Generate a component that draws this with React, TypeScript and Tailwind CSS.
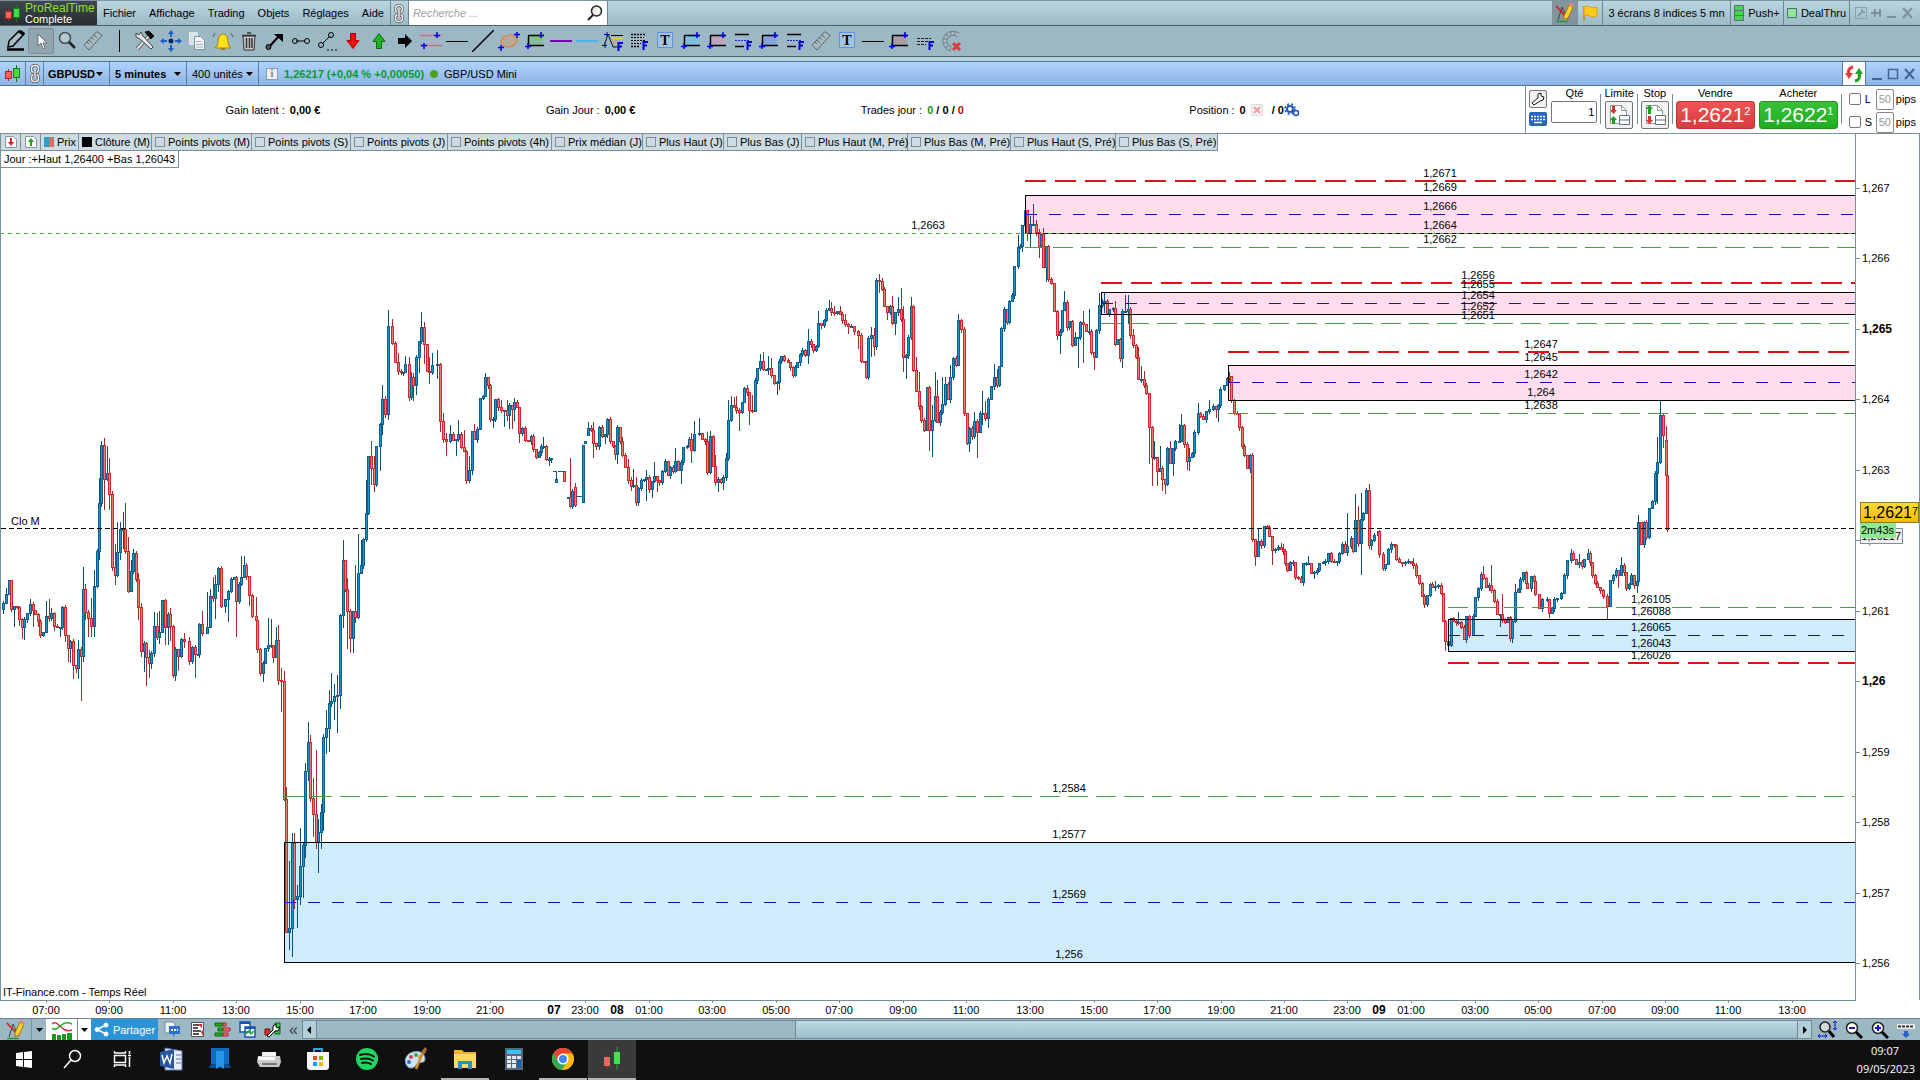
// Trading workstation: menu bar, drawing tools, order panel, candlestick chart, taskbar

import type { ReactNode } from "react";
import { clsx } from "clsx";

// Vertical origin of the chart data
const CHART_TOP = 134;

// [x, close, high, low, open] — 0 or missing means "derive it"
type Candle = [number, number, number?, number?, number?];

const CANDLES: Candle[] = [
  [3, 603, 601, 613, 609], [6, 594, 588, 602], [9, 580, 580, 594], [11, 609, 580, 611], [14, 606, 606, 626],
  [17, 607, 606, 608], [19, 619, 606, 625], [22, 627, 0, 638], [24, 619, 0, 639], [27, 613], [30, 604, 599],
  [33, 610, 0, 626], [35, 614], [38, 621, 0, 626], [40, 635], [43, 632, 0, 636], [46, 616, 601], [49, 618, 599],
  [51, 613, 608], [54, 626, 0, 630], [57, 627], [60, 627, 0, 636], [62, 607], [65, 635, 0, 641], [68, 648, 0, 661],
  [70, 641, 0, 662], [73, 665, 0, 678], [76, 668, 0, 672], [78, 649, 640, 678], [81, 656, 0, 700], [83, 589, 567, 661],
  [85, 612, 584, 619], [88, 618, 0, 636], [91, 626, 598, 636], [94, 586, 570, 636], [97, 551, 549], [99, 503, 478, 559],
  [101, 445, 441], [104, 479, 438, 509], [107, 473, 446], [109, 494, 458, 509], [112, 567, 491], [115, 575, 544, 584],
  [117, 552, 522, 576], [120, 529, 522, 559], [123, 529, 512, 548], [125, 551, 503], [128, 591, 537, 592], [131, 571, 560],
  [133, 553, 549, 573], [136, 579], [138, 607, 573, 619], [141, 651, 603, 656], [144, 643, 0, 671], [146, 657, 642, 685],
  [149, 663, 650, 677], [151, 653, 0, 668], [154, 626, 612], [157, 637, 613], [159, 632, 611, 643], [162, 600],
  [165, 627, 0, 644], [168, 614, 0, 644], [170, 626, 608, 640], [173, 675, 0, 677], [175, 649, 0, 680],
  [178, 656, 0, 670], [181, 639], [184, 641, 633, 647], [189, 661, 637], [192, 647], [195, 654, 0, 677], [198, 654],
  [199, 624], [202, 633, 611], [207, 627, 592, 633], [210, 596, 589], [213, 598, 577], [215, 584, 575, 618],
  [218, 568, 567, 591], [221, 606, 0, 607], [225, 599, 0, 612], [228, 591, 0, 621], [231, 579], [234, 577],
  [236, 601, 0, 636], [239, 584], [241, 577, 556], [244, 565, 556], [246, 576], [249, 595, 0, 605], [252, 616],
  [256, 620, 597], [257, 649], [260, 673], [263, 663, 0, 681], [265, 648], [268, 645, 618], [271, 645, 619],
  [273, 657, 0, 662], [276, 640, 627], [278, 680, 625, 684], [281, 681, 668, 711], [284, 799, 671], [286, 932, 787],
  [289, 928, 861, 949], [292, 843, 833, 956], [294, 899, 833, 908], [297, 896, 885, 927], [300, 866, 828, 904],
  [303, 845, 0, 897], [305, 771, 763, 857], [308, 742, 722, 780], [310, 798, 735], [313, 814, 778, 836],
  [316, 841, 750, 848], [318, 832, 819, 872], [321, 812, 804, 848], [323, 737, 734, 830], [326, 728, 710, 753],
  [329, 703, 690, 751], [331, 701, 673], [334, 696, 684, 719], [337, 695, 675, 732], [340, 615, 0, 708],
  [343, 560, 540, 627], [345, 589, 560], [347, 611, 578, 648], [350, 638, 0, 652], [353, 611, 0, 652],
  [355, 617, 565, 622], [358, 573, 534], [361, 565, 540], [363, 539], [366, 513, 480], [368, 456], [371, 468, 441, 484],
  [374, 484, 456, 491], [376, 446], [380, 424, 0, 470], [382, 399, 385, 434], [385, 414, 396], [388, 326, 310, 419],
  [392, 343, 319], [395, 362, 341], [398, 371, 353], [401, 372], [403, 372, 0, 375], [405, 364, 356], [409, 397, 357],
  [411, 377, 372], [413, 385, 373, 400], [416, 357, 0, 394], [419, 341, 0, 372], [421, 327, 312], [424, 344, 322, 363],
  [427, 371, 344], [429, 372, 357, 383], [432, 365, 353], [437, 364, 350, 378], [440, 421, 0, 431], [443, 439, 413],
  [446, 441, 433, 455], [450, 434, 425], [453, 440], [456, 439, 0, 455], [458, 434, 420], [461, 447], [464, 451, 430],
  [466, 480, 0, 483], [469, 470, 456], [472, 431, 0, 474], [474, 439, 424], [477, 429], [480, 398, 0, 428], [483, 396],
  [485, 377, 373], [488, 385], [490, 419], [493, 419, 0, 427], [495, 399, 0, 421], [498, 407], [501, 410, 400],
  [504, 410, 0, 426], [507, 415, 400, 420], [509, 405, 403, 428], [512, 409, 0, 428], [514, 402, 398, 420], [517, 407],
  [519, 433, 0, 442], [522, 428], [525, 440], [528, 441], [531, 436], [533, 449], [536, 457], [539, 452], [541, 446],
  [543, 446, 437], [546, 459], [549, 459, 0, 465], [551, 458], [556, 479, 471, 482, 482], [564, 481, 471, 481, 471],
  [568, 497, 497, 498, 498], [570, 506, 458, 507, 497], [572, 491], [575, 505, 483, 506, 487], [583, 445, 445, 502, 502],
  [585, 441, 441, 443, 443], [588, 428, 422, 435, 435], [591, 430, 425], [593, 443, 422, 457], [596, 446],
  [599, 427, 0, 449], [602, 436], [605, 434, 0, 443], [607, 419], [610, 441], [613, 446], [615, 454, 0, 459],
  [617, 427, 0, 463], [620, 441, 427], [622, 455, 437], [625, 467], [628, 480, 459], [631, 486, 477, 490], [633, 485, 469],
  [636, 502, 477, 505], [638, 488], [641, 480], [644, 479], [646, 477, 470, 500], [649, 489], [652, 481, 0, 497],
  [654, 476, 462, 482], [657, 480, 477, 491], [659, 482], [662, 471], [665, 461], [668, 475], [670, 467], [673, 471],
  [675, 461, 448], [678, 470], [681, 462, 0, 483], [683, 447], [687, 446], [689, 439, 437], [691, 450, 433, 462],
  [694, 434, 421, 451], [699, 433, 418], [702, 439], [705, 441], [707, 472, 432], [710, 436, 431, 473], [713, 466],
  [715, 482, 455], [718, 479, 477, 491], [721, 482], [723, 477, 0, 489], [726, 458, 453], [728, 420, 400], [731, 405, 396],
  [734, 407, 397], [736, 410, 396], [739, 412, 0, 430], [742, 402], [744, 388], [747, 392, 385], [749, 410, 0, 424],
  [752, 411, 395], [755, 380], [757, 368], [760, 361, 354, 370], [763, 369, 352], [766, 369], [768, 368, 356, 374],
  [771, 375, 358], [774, 383], [777, 382, 0, 394], [779, 361, 0, 389], [781, 356], [784, 360], [788, 362], [790, 367],
  [793, 375], [795, 367], [797, 362], [800, 354], [802, 350], [805, 355, 349], [808, 341, 329, 363], [811, 344],
  [813, 350], [816, 346], [818, 323, 311, 347], [821, 325], [824, 320], [826, 310], [829, 308, 300], [831, 312, 302],
  [834, 313, 306], [837, 311], [840, 314, 306], [842, 320], [845, 324, 314], [848, 326, 0, 333], [851, 326], [854, 331],
  [858, 335, 0, 348], [861, 361], [864, 362], [866, 377, 0, 378], [868, 338], [871, 335, 327, 356], [874, 346, 328, 355],
  [876, 280], [879, 281, 274, 292], [882, 289, 278], [884, 306], [887, 312, 0, 319], [890, 306], [892, 323, 296],
  [895, 312, 0, 334], [898, 309, 297], [901, 319, 288], [903, 357, 306, 371], [906, 355, 0, 378], [908, 337],
  [911, 306, 297], [913, 370], [916, 391, 357], [919, 406, 372], [921, 420], [924, 430], [927, 387], [929, 430, 386, 450],
  [932, 420, 405, 456], [935, 396, 372], [937, 422, 380], [940, 412], [942, 404, 377], [945, 384, 377], [948, 399],
  [950, 377, 365], [953, 358], [956, 365], [958, 320, 314], [961, 329, 319], [964, 413], [967, 443], [969, 428, 0, 451],
  [972, 436], [974, 421, 412], [977, 432, 419, 457], [980, 413], [982, 413, 391, 424], [985, 418, 401], [988, 399, 0, 427],
  [991, 386], [994, 377, 364], [997, 385, 369], [999, 366], [1001, 328], [1004, 309], [1007, 322], [1009, 301],
  [1012, 295], [1014, 266], [1018, 247, 235], [1020, 246], [1022, 225, 0, 251], [1025, 210], [1027, 233, 214, 240],
  [1030, 224, 216, 246], [1033, 224, 204], [1036, 232, 220], [1039, 246, 229, 257], [1041, 234], [1043, 267, 228],
  [1046, 246, 0, 281], [1048, 279], [1051, 283], [1054, 311], [1057, 335, 0, 339], [1060, 331, 0, 353], [1062, 310],
  [1064, 302, 291], [1067, 327], [1069, 321], [1072, 345], [1075, 337, 332], [1078, 337, 0, 367], [1080, 322],
  [1083, 324, 311, 362], [1086, 331], [1089, 331, 309], [1091, 352], [1094, 357, 0, 369], [1096, 330], [1099, 305, 293],
  [1102, 302, 299], [1104, 301, 293, 312], [1107, 313], [1109, 309], [1113, 308], [1115, 344, 301], [1117, 339],
  [1120, 358], [1122, 311, 0, 367], [1125, 311, 295], [1128, 309, 295, 323], [1130, 335], [1133, 345, 329], [1136, 357],
  [1138, 379, 347], [1141, 379, 366], [1144, 385, 371], [1146, 393], [1149, 427, 0, 463], [1152, 457, 0, 485],
  [1154, 457, 441], [1157, 471, 0, 485], [1160, 468, 446], [1162, 479, 0, 490], [1165, 484, 0, 493], [1167, 448],
  [1170, 463, 441], [1173, 448, 0, 475], [1175, 441], [1179, 441, 424], [1181, 425, 414], [1184, 444], [1187, 461, 0, 469],
  [1189, 457, 448, 470], [1192, 453], [1194, 432], [1198, 413, 403], [1200, 416, 412], [1203, 419], [1206, 411],
  [1209, 409, 400], [1213, 406], [1216, 409, 0, 417], [1218, 405, 0, 421], [1220, 389], [1224, 385], [1227, 378],
  [1229, 376, 372], [1231, 400], [1234, 413], [1237, 414], [1239, 427], [1242, 446], [1244, 455], [1247, 468],
  [1250, 455, 0, 472], [1252, 539], [1255, 556, 0, 565], [1258, 541, 528], [1261, 545], [1264, 526], [1267, 527],
  [1269, 536], [1272, 550, 0, 564], [1275, 549], [1278, 547], [1281, 549, 543], [1283, 551, 544], [1285, 563], [1287, 570],
  [1290, 562], [1293, 562], [1295, 577], [1298, 578], [1301, 582], [1303, 563], [1306, 563], [1308, 563, 556], [1311, 573],
  [1314, 572, 0, 578], [1317, 570], [1319, 563], [1323, 562], [1325, 561], [1328, 553], [1331, 561], [1334, 562],
  [1337, 561], [1339, 553], [1342, 544], [1345, 552, 541], [1347, 546, 513], [1351, 538], [1353, 551], [1355, 520, 494],
  [1358, 543, 506], [1361, 519, 493, 574], [1363, 513], [1366, 490], [1369, 545, 484], [1371, 540, 0, 549], [1374, 535],
  [1378, 531], [1379, 554], [1383, 568], [1385, 564, 0, 570], [1388, 549], [1391, 544], [1394, 545], [1396, 559],
  [1399, 562], [1402, 563], [1405, 562], [1408, 561], [1411, 563], [1413, 565, 558], [1416, 575], [1419, 583], [1422, 596],
  [1424, 604], [1427, 595], [1430, 584], [1432, 587], [1435, 586, 581], [1438, 585], [1441, 593], [1443, 621],
  [1445, 641, 0, 650], [1448, 645], [1451, 618], [1453, 621], [1456, 622], [1458, 622, 612], [1461, 627], [1464, 639],
  [1466, 616], [1469, 635], [1473, 616, 0, 635], [1475, 597], [1478, 588], [1481, 574], [1483, 578, 566], [1486, 587],
  [1489, 585], [1491, 590, 565], [1494, 601], [1497, 614], [1500, 614, 0, 626], [1502, 620, 594], [1505, 622], [1508, 617],
  [1510, 638], [1512, 621, 0, 642], [1515, 592, 584], [1518, 589], [1520, 579], [1523, 572], [1526, 583], [1527, 588],
  [1531, 576], [1534, 581], [1535, 594], [1539, 608], [1542, 599], [1547, 599], [1549, 613, 0, 617], [1552, 608],
  [1554, 599], [1557, 598], [1561, 593], [1564, 575], [1567, 560], [1571, 553, 549], [1573, 559], [1576, 564],
  [1579, 562, 554], [1582, 566], [1584, 559], [1588, 553, 549], [1590, 562], [1592, 575], [1595, 583], [1597, 587],
  [1600, 590], [1603, 596], [1607, 606, 0, 619], [1610, 580], [1613, 575], [1616, 570], [1618, 575, 0, 587],
  [1621, 565, 557], [1624, 572], [1626, 588], [1629, 584], [1631, 575], [1634, 585], [1637, 581, 0, 592], [1638, 522, 515],
  [1641, 544], [1644, 522], [1646, 537], [1649, 508], [1652, 501], [1655, 473], [1657, 462, 437, 503], [1660, 415, 400],
  [1663, 435, 0, 447], [1666, 475, 426, 0, 440], [1667, 529, 468],
];

type Zone = {
  x: number;
  top: number;
  mid: number;
  bottom: number;
  red?: number;
  green: number;
  fill: string;
  labelX: number;
  labels: Array<[string, number]>;
};

const PINK = "#FFDDEE";
const SKY = "#CFECFD";

const ZONES: Zone[] = [
  { x: 1025, top: 195, mid: 214, bottom: 233, red: 181, green: 247, fill: PINK, labelX: 1440,
    labels: [["1,2671", 181], ["1,2669", 195], ["1,2666", 214], ["1,2664", 233], ["1,2662", 247]] },
  { x: 1101, top: 292, mid: 303, bottom: 314, red: 283, green: 323, fill: PINK, labelX: 1478,
    labels: [["1,2656", 283], ["1,2655", 292], ["1,2654", 303], ["1,2652", 314], ["1,2651", 323]] },
  { x: 1228, top: 365, mid: 382, bottom: 400, red: 352, green: 413, fill: PINK, labelX: 1541,
    labels: [["1,2647", 352], ["1,2645", 365], ["1,2642", 382], ["1,264", 400], ["1,2638", 413]] },
  { x: 1448, top: 619, mid: 635, bottom: 651, red: 663, green: 607, fill: SKY, labelX: 1651,
    labels: [["1,26105", 607], ["1,26088", 619], ["1,26065", 635], ["1,26043", 651], ["1,26026", 663]] },
  { x: 284, top: 842, mid: 902, bottom: 962, green: 796, fill: SKY, labelX: 1069,
    labels: [["1,2584", 796], ["1,2577", 842], ["1,2569", 902], ["1,256", 962]] },
];

const PRICE_TICKS: Array<[string, number]> = [
  ["1,267", 188], ["1,266", 258], ["1,265", 329], ["1,264", 399], ["1,263", 470], ["1,262", 540],
  ["1,261", 611], ["1,26", 681], ["1,259", 752], ["1,258", 822], ["1,257", 893], ["1,256", 963],
];

const TIME_TICKS: Array<[string, number]> = [
  ["07:00", 46], ["09:00", 109], ["11:00", 173], ["13:00", 236], ["15:00", 300], ["17:00", 363], ["19:00", 427],
  ["21:00", 490], ["07", 554], ["23:00", 585], ["08", 617], ["01:00", 649], ["03:00", 712], ["05:00", 776],
  ["07:00", 839], ["09:00", 903], ["11:00", 966], ["13:00", 1030], ["15:00", 1094], ["17:00", 1157], ["19:00", 1221],
  ["21:00", 1284], ["23:00", 1347], ["09", 1379], ["01:00", 1411], ["03:00", 1475], ["05:00", 1538], ["07:00", 1602],
  ["09:00", 1665], ["11:00", 1728], ["13:00", 1792],
];

const MENUS = ["Fichier", "Affichage", "Trading", "Objets", "Réglages", "Aide"];

const INDICATORS = [
  { label: "Points pivots (M)", width: "w-[100px]" },
  { label: "Points pivots (S)", width: "w-[99px]" },
  { label: "Points pivots (J)", width: "w-[97px]" },
  { label: "Points pivots (4h)", width: "w-[104px]" },
  { label: "Prix médian (J)", width: "w-[91px]" },
  { label: "Plus Haut (J)", width: "w-[81px]" },
  { label: "Plus Bas (J)", width: "w-[78px]" },
  { label: "Plus Haut (M, Pré)", width: "w-[106px]" },
  { label: "Plus Bas (M, Pré)", width: "w-[103px]" },
  { label: "Plus Haut (S, Pré)", width: "w-[105px]" },
  { label: "Plus Bas (S, Pré)", width: "w-[102px]" },
];

export default function App() {
  return (
    <div className="flex h-screen min-h-[600px] w-full flex-col overflow-hidden bg-white font-['Liberation_Sans',Arial,sans-serif] text-[11px] leading-4 text-black">
      <MenuBar />
      <DrawingBar />
      <div className="h-1 shrink-0 bg-[#b9d3dd]" />
      <ChartTitle />
      <OrderPanel />
      <Chart />
      <TimeAxis />
      <BottomBar />
      <Taskbar />
    </div>
  );
}

// =====================================================================
// Menu bar
// =====================================================================
function MenuBar() {
  return (
    <header className="flex h-[26px] shrink-0 items-stretch border-t border-b border-t-[#7d929c] border-b-[#4d626c] bg-gradient-to-b from-[#b9d5e0] to-[#9cbbc7]">
      <div className="flex w-[97px] items-center gap-1 bg-gradient-to-b from-[#3f474c] to-[#282e32] pl-1">
        <CandlesIcon size={17} />
        <div className="leading-none">
          <div className="text-xs leading-3 text-[#8ee02c]">ProRealTime</div>
          <div className="leading-[10px] text-white">Complete</div>
        </div>
      </div>
      <nav className="flex items-center gap-[13px] px-[6px]">
        {MENUS.map((m) => (
          <button key={m} type="button">
            {m}
          </button>
        ))}
      </nav>
      <div className="flex w-[19px] items-center justify-center border-x border-[#6d8590]">
        <ChainIcon />
      </div>
      <label className="flex w-[199px] items-center border-r border-[#6d8590] bg-white pr-1">
        <input
          type="text"
          aria-label="Recherche"
          placeholder="Recherche ..."
          className="min-w-0 flex-1 pl-1 italic outline-none placeholder:text-[#a0a0a0]"
        />
        <LoupeIcon />
      </label>
      <div className="ml-auto flex items-stretch">
        <button type="button" aria-label="Dessiner" className="flex w-[26px] items-center justify-center bg-[#83949d]">
          <PencilChartIcon />
        </button>
        <button type="button" aria-label="Alerte" className="flex w-[25px] items-center justify-center border-r border-[#6d8590]">
          <svg width="17" height="18" viewBox="0 0 17 18">
            <path d="M2 2v15" stroke="#c98a00" strokeWidth="1.5" />
            <path d="M2 3c4-3 7 3 13 0v9c-6 3-9-3-13 0Z" fill="#ffc91c" stroke="#e0a000" />
          </svg>
        </button>
        <span className="flex w-[128px] items-center justify-center border-r border-[#6d8590]">3 écrans 8 indices 5 mn</span>
        <button type="button" className="flex w-[53px] items-center justify-center gap-1 border-r border-[#6d8590]">
          <svg width="10" height="16" viewBox="0 0 10 16">
            <path d="M.5.5h9v15h-9ZM.5 5.5h9M.5 10.5h9" fill="#4bd44b" stroke="#4e7180" />
          </svg>
          Push+
        </button>
        <button type="button" className="flex w-[66px] items-center justify-center gap-1 border-r border-[#6d8590]">
          <span className="h-[10px] w-[10px] border border-[#4e7180] bg-[#8fe88f]" />
          DealThru
        </button>
        <div className="flex w-[70px] items-center justify-center">
          <svg width="62" height="14" viewBox="0 0 62 14" fill="none" stroke="#7b929c" strokeWidth="2">
            <rect x="1.500" y="1.500" width="11" height="11" strokeWidth="1" strokeDasharray="2 1" />
            <path d="M4 10l5-5M8 3v3h3" strokeWidth="1.500" />
            <path d="M17 7h4M21 3v8M21 7h6M26 3v8" />
            <path d="M33 11h9M49 2l9 10M58 2l-9 10" />
          </svg>
        </div>
      </div>
    </header>
  );
}

// =====================================================================
// Drawing tools
// =====================================================================
const PLUS = "#0000e0";

function BoxGlyph({ fill }: { fill: string }) {
  return (
    <>
      <rect x="5" y="6" width="14" height="9" fill={fill} />
      <path d="M4 5.500h16M4 15.500h16M4.500 6v9" stroke="#000" strokeWidth="1.500" />
      <path d="M1 16.500h6M4 13v6M14 5.500h6M17 2v6" stroke={PLUS} strokeWidth="1.500" />
    </>
  );
}

function LevelsGlyph({ full }: { full?: boolean }) {
  return (
    <>
      <path d="M3 4.500h14M3 16.500h9" stroke="#000" strokeWidth="1.500" strokeDasharray={full ? undefined : "2 1"} />
      <path d="M3 10.500h14" stroke={full ? "#22c" : "#000"} strokeDasharray="2 1" />
      <path d="M15.500 20v-8H20M15.500 15.500H19" stroke={PLUS} strokeWidth="2" />
    </>
  );
}

function NoteGlyph() {
  return (
    <>
      <path d="M3.500 2.500h15v15h-15Z" fill="#a6c5dc" stroke="#5b93e6" />
      <text x="11" y="15" textAnchor="middle" className="fill-black stroke-none font-['Liberation_Serif',serif] text-[14px] font-bold">
        T
      </text>
    </>
  );
}

function RulerGlyph() {
  return (
    <>
      <path d="M2 15 15 1.500l5 4L7 20Z" fill="#a9b9c0" stroke="#56666e" />
      <path d="m5 12 2 2M7 10l3 3M9.500 7.500l2 2M12 5l3 3" stroke="#56666e" />
    </>
  );
}

const TOOLS: Array<{ name: string; glyph: ReactNode }> = [
  { name: "Crayon", glyph: <><path d="M3 19.500h17" stroke="#000" strokeWidth="2.500" /><path d="m4 17 1-6L15 1l5 3L9 16Z" fill="#a9bcc4" stroke="#000" strokeWidth="1.500" /><path d="m14 2 5 4 2-3-4-3Z" fill="#000" /></> },
  { name: "Curseur", glyph: <path d="m8 4 0 12 3-3 2 6 2-1-2-5h4Z" fill="#fff" stroke="#6b6f72" /> },
  { name: "Zoom", glyph: <><circle cx="9" cy="8" r="5.500" fill="#b4cad3" stroke="#454d52" strokeWidth="1.500" /><path d="m13 12 6 6" stroke="#222" strokeWidth="2.500" /></> },
  { name: "Règle", glyph: <RulerGlyph /> },
  { name: "", glyph: <path d="M11.500 0v22" stroke="#000" /> },
  { name: "Outils", glyph: <><path d="m3 19 12-13" stroke="#555" strokeWidth="4" /><path d="m3 19 12-13" stroke="#e5e5e5" strokeWidth="2" /><path d="M2 3v4l4 2 11 10 2-2L9 6 7 2 5 5Z" fill="#e5e5e5" stroke="#444" /><path d="m11 2 4-1 5 5-3 3Z" fill="#111" stroke="#111" /></> },
  { name: "Déplacer", glyph: <><path d="M11 1v6M11 15v6M1 11h6M15 11h6" stroke="#1b5fc8" strokeWidth="2" /><path d="m8 4 3-4 3 4ZM8 18l3 4 3-4ZM4 8l-4 3 4 3ZM18 8l4 3-4 3Z" fill="#1b5fc8" /><circle cx="11" cy="11" r="2.500" fill="#0b2350" /></> },
  { name: "Copier", glyph: <><path d="M3.500 2.500h8v12h-8Z" fill="#d9e2e6" stroke="#dfe8ec" /><path d="M8.500 6.500h6l4 4v9h-10Z" fill="#f5f8f9" stroke="#7e959f" /><path d="M10 11.500h5M10 14.500h7M10 17h7" stroke="#9aacb4" /></> },
  { name: "Alarme", glyph: <><path d="M5 16c2-4 0-12 6-12s4 8 6 12l2 2H3Z" fill="#ffe11c" stroke="#a67c00" /><path d="M9 19h4" stroke="#a67c00" strokeWidth="2" /><path d="M3 3 1 7M19 3l2 4" stroke="#555" /></> },
  { name: "Supprimer", glyph: <><path d="M5 6h12l-1 14H6Z" fill="#c9c9c9" stroke="#333" /><path d="M4 5.500h14M9 3h4M8.500 8v10M11.500 8v10M14 8v10" stroke="#333" strokeWidth="1.500" /></> },
  { name: "Flèche", glyph: <><path d="m5 17 10-11" stroke="#000" strokeWidth="2" /><circle cx="4.500" cy="17" r="2.500" fill="#555" stroke="#000" /><path d="M10 4h9v8Z" fill="#000" /></> },
  { name: "Segment", glyph: <><path d="M6 11h9" stroke="#000" /><circle cx="5" cy="11" r="2.500" stroke="#000" /><circle cx="17" cy="11" r="2.500" stroke="#000" /></> },
  { name: "Segment prolongé", glyph: <><path d="m6 14 8-8" stroke="#000" /><circle cx="5" cy="15" r="2.500" stroke="#000" /><circle cx="15" cy="5" r="2.500" stroke="#000" /><path d="M11 20h10" stroke="#000" strokeDasharray="2 2" /></> },
  { name: "Baisse", glyph: <path d="M8.500 3.500h5v7h3.500l-6 8-6-8h3.500Z" fill="#fb0b0b" stroke="#a80000" /> },
  { name: "Hausse", glyph: <path d="M8.500 18.500h5v-7h3.500l-6-8-6 8h3.500Z" fill="#1fb11f" stroke="#0a6b0a" /> },
  { name: "Droite", glyph: <path d="M4 8h7V4l7 7-7 7v-4H4Z" fill="#000" /> },
  { name: "Canal", glyph: <><path d="M0 5.500h22M0 15.500h22" stroke="#d96b78" strokeWidth="1.500" /><path d="M1 15.500h6M4 13v6M14 5.500h6M17 2v6" stroke={PLUS} strokeWidth="1.500" /></> },
  { name: "Horizontale", glyph: <path d="M0 11.500h22" stroke="#000" /> },
  { name: "Oblique", glyph: <path d="M0 22 22 0" stroke="#000" strokeWidth="1.500" /> },
  { name: "Ellipse", glyph: <><ellipse cx="11" cy="11" rx="8" ry="6" fill="#b9a99a" stroke="#e27b35" transform="rotate(-15 11 11)" /><path d="M0 17.500h6M3 15v6M16 4.500h6M19 2v6" stroke={PLUS} strokeWidth="1.500" /></> },
  { name: "Rectangle vert", glyph: <BoxGlyph fill="#86bd9c" /> },
  { name: "Ligne violette", glyph: <path d="M0 11h22" stroke="#7a00b4" strokeWidth="2" /> },
  { name: "Ligne bleue", glyph: <path d="M0 11h22" stroke="#4fb2ec" strokeWidth="2" /> },
  { name: "Fibonacci", glyph: <><path d="M2 16 6 4l5 13h7" stroke="#111" /><path d="M9 5.500h12" stroke="#000" /><path d="M10 8.500h11" stroke="#e7c92c" strokeWidth="2" /><path d="M10 12h9" stroke="#dc9b5b" strokeWidth="2" strokeDasharray="2 1" /><path d="M0 15.500h5M3 13v5M2 4.500h6M5 2v5" stroke={PLUS} /><path d="M16.500 21v-8H21M16.500 16.500H20" stroke={PLUS} strokeWidth="2" /></> },
  { name: "Retracement", glyph: <><LevelsGlyph /><path d="M3 7.500h13M3 13.500h10" stroke="#000" strokeDasharray="2 1" /></> },
  { name: "Texte", glyph: <NoteGlyph /> },
  { name: "Zone bleue", glyph: <BoxGlyph fill="#7fbfe0" /> },
  { name: "Zone rose", glyph: <BoxGlyph fill="#bfa3bf" /> },
  { name: "Niveaux", glyph: <LevelsGlyph full /> },
  { name: "Zone indigo", glyph: <BoxGlyph fill="#84a6dc" /> },
  { name: "Niveaux bis", glyph: <LevelsGlyph full /> },
  { name: "Mesure", glyph: <RulerGlyph /> },
  { name: "Note", glyph: <NoteGlyph /> },
  { name: "Trait", glyph: <path d="M0 11.500h22" stroke="#000" /> },
  { name: "Zone grise", glyph: <BoxGlyph fill="#ab9da6" /> },
  { name: "Extension", glyph: <><path d="M3 8.500h14M3 11.500h11M3 14.500h9" stroke="#222" strokeDasharray="3 1" /><path d="M15.500 20v-8H20M15.500 15.500H19" stroke={PLUS} strokeWidth="2" /></> },
  { name: "Aimant", glyph: <><path d="M18 5A8 8 0 1 0 11 19" stroke="#71858e" strokeWidth="5" /><path d="M18 5A8 8 0 1 0 11 19" stroke="#a5bac3" strokeWidth="3" strokeDasharray="3 1" /><path d="m13 13 7 7M20 13l-7 7" stroke="#da3b3b" strokeWidth="3" /></> },
];

function DrawingBar() {
  return (
    <div className="flex h-[31px] shrink-0 items-center overflow-hidden border-b border-[#4d626c] bg-[#9cb8c4] pl-[2px]">
      {TOOLS.map((t, i) => (
        <button
          key={i}
          type="button"
          aria-label={t.name || "Séparateur"}
          className={clsx(
            "flex h-[26px] w-[26px] shrink-0 items-center justify-center",
            t.name === "Curseur" && "rounded-[2px] border border-[#7d8c94] bg-[#92a6af]"
          )}
        >
          <svg width="22" height="22" viewBox="0 0 22 22" fill="none" className="shrink-0">
            {t.glyph}
          </svg>
        </button>
      ))}
    </div>
  );
}

// =====================================================================
// Chart title bar
// =====================================================================
function ChartTitle() {
  return (
    <div className="flex h-[25px] shrink-0 items-stretch border-t border-b border-[#4f7399] bg-gradient-to-b from-[#aed3ff] to-[#8eb4e2]">
      <div className="flex w-[26px] items-center justify-center border-r border-[#5c7fa6]">
        <CandlesIcon size={17} />
      </div>
      <div className="flex w-[18px] items-center justify-center border-r border-[#5c7fa6]">
        <ChainIcon />
      </div>
      <button type="button" className="flex w-[66px] items-center justify-between border-r border-[#5c7fa6] pr-[6px] pl-1 font-bold">
        GBPUSD <Caret />
      </button>
      <button type="button" className="flex w-[77px] items-center justify-between border-r border-[#5c7fa6] px-[5px] font-bold">
        5 minutes <Caret />
      </button>
      <button type="button" className="flex w-[72px] items-center justify-between border-r border-[#5c7fa6] px-[5px]">
        400 unités <Caret />
      </button>
      <div className="flex items-center gap-[6px] pl-[7px]">
        <span className="flex h-3 w-3 items-center justify-center border border-[#8b9bb0] bg-[#f2f2f2] font-serif text-[11px] font-bold text-[#8b8b8b]">
          i
        </span>
        <span className="font-bold text-[#0a9a2a]">1,26217 (+0,04 % +0,00050)</span>
        <span className="h-2 w-2 rounded-full bg-[#4aa51a]" />
        <span>GBP/USD Mini</span>
      </div>
      <div className="ml-auto flex items-stretch">
        <button type="button" aria-label="Actualiser" className="flex w-6 items-center justify-center border-x border-[#5c7fa6] bg-white">
          <svg width="20" height="20" viewBox="0 0 20 20" fill="none">
            <path d="M9 3C4 4 4 8 5 11" stroke="#e33b3b" strokeWidth="3" />
            <path d="m1 9 4 6 4-6Z" fill="#e33b3b" />
            <path d="M11 17c5-1 5-5 4-8" stroke="#1fa51f" strokeWidth="3" />
            <path d="m11 10 4-6 4 6Z" fill="#1fa51f" />
          </svg>
        </button>
        <svg width="54" height="23" viewBox="0 0 54 23" fill="none" stroke="#3d6796" strokeWidth="2">
          <path d="M6 17h10M39 7l9 10M48 7l-9 10" />
          <path d="M22.500 7.500h9v9h-9Z" strokeWidth="1.500" />
        </svg>
      </div>
    </div>
  );
}

// =====================================================================
// Account figures and order entry
// =====================================================================
function OrderPanel() {
  return (
    <section className="flex h-12 shrink-0 items-stretch border-b border-[#7b8f98]">
      <div className="flex flex-1 items-center justify-evenly">
        <p>
          Gain latent : <b className="pl-[2px]">0,00 €</b>
        </p>
        <p>
          Gain Jour : <b className="pl-[2px]">0,00 €</b>
        </p>
        <p>
          Trades jour :{" "}
          <b className="pl-[2px]">
            <span className="text-[#179417]">0</span> / 0 / <span className="text-[#b41212]">0</span>
          </b>
        </p>
        <p className="flex items-center">
          Position : <b className="px-[5px]">0</b>
          <svg width="12" height="12" viewBox="0 0 12 12">
            <path d="M.5.5h11v11H.5Z" fill="#f3f3f3" stroke="#ddd" />
            <path d="m3 3 6 6M9 3 3 9" stroke="#f29a9a" strokeWidth="2" />
          </svg>
          <b className="pl-[9px]">/ 0</b>
          <svg width="16" height="14" viewBox="0 0 16 14" fill="none" stroke="#1c59b5">
            <circle cx="6" cy="6" r="3" strokeWidth="2" />
            <circle cx="6" cy="6" r="5" strokeWidth="1.500" strokeDasharray="2 2" />
            <circle cx="12" cy="10" r="2.500" strokeWidth="1.500" />
          </svg>
        </p>
      </div>
      <div className="flex items-stretch gap-1 border-l border-[#7b8f98] pl-[3px]">
        <div className="flex flex-col items-center gap-1 pt-1">
          <button type="button" aria-label="Réglages" className="flex h-[18px] w-[18px] items-center justify-center rounded-[2px] border border-[#777] bg-[#f0f0f0]">
            <svg width="14" height="14" viewBox="0 0 14 14" fill="#fff" stroke="#111">
              <path d="m1 11 6-5V2l3-1v3l3 1-1 3-3 1-6 4Z" />
            </svg>
          </button>
          <button type="button" aria-label="Clavier" className="flex h-[14px] w-[18px] items-center justify-center rounded-[2px] bg-[#2a66c0]">
            <svg width="14" height="9" viewBox="0 0 14 9" stroke="#fff" strokeWidth="1.500" fill="none">
              <path d="M0 1.500h14M0 4.500h14" strokeDasharray="2 1" />
              <path d="M3 7.500h8" />
            </svg>
          </button>
        </div>
        <Field label="Qté">
          <input
            aria-label="Qté"
            defaultValue="1"
            className="h-[22px] w-[46px] rounded-[2px] border border-[#777] pr-[2px] text-right outline-none"
          />
        </Field>
        <Separator />
        <Field label="Limite">
          <OrderButton name="Limite" first="#d93030" second="#1d9e1d" />
        </Field>
        <Separator />
        <Field label="Stop">
          <OrderButton name="Stop" first="#1d9e1d" second="#d93030" />
        </Field>
        <Separator />
        <Field label="Vendre">
          <PriceButton price="1,2621" sup="2" className="border-[#b33] bg-gradient-to-b from-[#f05454] to-[#d83c3c]" />
        </Field>
        <Field label="Acheter">
          <PriceButton price="1,2622" sup="1" className="border-[#1f941f] bg-gradient-to-b from-[#36c236] to-[#20ac20]" />
        </Field>
        <Separator />
        <div className="flex flex-col justify-between pt-[2px] pr-1 pl-1">
          {["L", "S"].map((k) => (
            <div key={k} className="flex h-[22px] items-center gap-[2px]">
              <label className="flex w-[25px] items-center gap-1">
                <input type="checkbox" className="h-3 w-3 shrink-0 appearance-none rounded-[2px] border border-[#777] bg-white" />
                {k}
              </label>
              <input
                aria-label={`${k} pips`}
                defaultValue="50"
                className="h-[21px] w-[18px] rounded-[2px] border border-[#888] text-center text-[#8d9aa0] outline-none"
              />
              <span>pips</span>
            </div>
          ))}
        </div>
      </div>
    </section>
  );
}

function Field({ label, children }: { label: string; children: ReactNode }) {
  return (
    <div className="flex flex-col items-center">
      <span className="leading-[15px]">{label}</span>
      {children}
    </div>
  );
}

function Separator() {
  return <span className="mt-2 -mx-px h-[30px] w-px bg-[#7b8f98]" />;
}

function OrderButton({ name, first, second }: { name: string; first: string; second: string }) {
  return (
    <button type="button" aria-label={name} className="flex h-7 w-7 items-center justify-center rounded-[2px] border border-[#777] bg-[#f2f2f2]">
      <svg width="24" height="24" viewBox="0 0 24 24" fill="none">
        <path d="M3.500 2.500h11l5 5v13h-16Z" fill="#fff" stroke="#8a9499" />
        <path d="M14.500 2.500v5h5" stroke="#8a9499" />
        <path d="M12.500 12.500h10v9h-10ZM12.500 17h10" fill="#fff" stroke="#62707a" />
        <path d="M6 2v8M6 15v6" stroke="#888" />
        {first === "#d93030" ? (
          <>
            <path d="M5 3h3v4h2l-3.500 4L3 7h2Z" fill={first} />
            <path d="M5 21h3v-4h2l-3.500-4L3 17h2Z" fill={second} />
          </>
        ) : (
          <>
            <path d="M5 11h3V6h2L6.500 2 3 6h2Z" fill={first} />
            <path d="M5 13h3v4h2l-3.500 4L3 17h2Z" fill={second} />
          </>
        )}
      </svg>
    </button>
  );
}

function PriceButton({ price, sup, className }: { price: string; sup: string; className: string }) {
  return (
    <button type="button" className={clsx("flex h-7 w-[79px] items-center justify-center rounded-[3px] border text-white", className)}>
      <span className="text-[21px] leading-7">{price}</span>
      <span className="pb-2 text-[11px]">{sup}</span>
    </button>
  );
}

// =====================================================================
// Chart
// =====================================================================
function Chart() {
  return (
    <main className="relative flex min-h-0 flex-1">
      <svg className="h-full min-w-0 flex-1" shapeRendering="crispEdges">
        <g transform={`translate(0 ${-CHART_TOP})`}>
          {ZONES.map((z) => (
            <g key={z.x}>
              <rect x={z.x} y={z.top} width="100%" height={z.bottom - z.top} fill={z.fill} />
            </g>
          ))}
          <Candles />
          {ZONES.map((z) => (
            <ZoneLines key={z.x} zone={z} />
          ))}
          <line x1="0" x2="100%" y1="233.5" y2="233.5" stroke="#4ba14b" strokeDasharray="4 4" />
          <line x1="1" x2="100%" y1="528.5" y2="528.5" stroke="#000" strokeDasharray="5 3" />
          <text x="11" y="525">Clo M</text>
          <text x="928" y="229" textAnchor="middle">1,2663</text>
        </g>
        <line x1="0.5" x2="0.5" y1="0" y2="100%" stroke="#7b8f98" />
      </svg>
      <PriceAxis />

      {/* Overlays: indicator tabs, day range, data source */}
      <div className="absolute top-0 left-0 flex h-[17px] items-stretch border-b border-l border-[#7b8f98] bg-[#cddce3]">
        <IndicatorArrow down />
        <IndicatorArrow />
        <span className="flex w-[38px] items-center gap-[3px] border-r border-[#7b8f98] pl-[3px]">
          <svg width="10" height="10" viewBox="0 0 10 10">
            <path d="M0 0h5v10H0Z" fill="#2f9fc9" />
            <path d="M5 0h5v10H5Z" fill="#ee6363" />
          </svg>
          Prix
        </span>
        <span className="flex w-[73px] items-center gap-[3px] border-r border-[#7b8f98] pl-[3px]">
          <span className="h-[10px] w-[10px] bg-black" />
          Clôture (M)
        </span>
        {INDICATORS.map((it) => (
          <label key={it.label} className={clsx("flex items-center gap-[3px] border-r border-[#7b8f98] pl-[3px] whitespace-nowrap", it.width)}>
            <input type="checkbox" className="h-[10px] w-[10px] shrink-0 appearance-none border border-[#7b8f98]" />
            {it.label}
          </label>
        ))}
      </div>
      <div className="absolute top-[17px] left-0 flex h-[17px] items-center border-r border-b border-l border-[#7b8f98] bg-white px-[3px]">
        Jour :+Haut 1,26400 +Bas 1,26043
      </div>
      <div className="absolute bottom-0 left-[3px]">IT-Finance.com - Temps Réel</div>
    </main>
  );
}

function IndicatorArrow({ down }: { down?: boolean }) {
  return (
    <button type="button" aria-label={down ? "Réduire" : "Agrandir"} className="flex w-5 items-center justify-center border-r border-[#7b8f98]">
      <svg width="12" height="12" viewBox="0 0 12 12">
        <path d="M.5.5h8l3 3v8H.5Z" fill="#fff" stroke="#8a979d" />
        {down ? <path d="M5 2h2v4h2L6 10 3 6h2Z" fill="#e02020" /> : <path d="M5 10h2V6h2L6 2 3 6h2Z" fill="#19a319" />}
      </svg>
    </button>
  );
}

function Candles() {
  return (
    <g>
      {CANDLES.map(([x, close, high, low, open], i) => {
        const from = open || CANDLES[i - 1][1];
        const up = close <= from;
        const top = Math.min(from, close);
        const bottom = Math.max(from, close);
        const wickTop = Math.min(high || top - (i % 3), top);
        const wickBottom = Math.max(low || bottom + ((i * 7) % 4), bottom);
        const bodyHeight = Math.max(bottom - top, 1) + 1;
        return (
          <g key={i}>
            <rect x={x} y={wickTop} width="1" height={wickBottom - wickTop + 1} fill={up ? "#0b5078" : "#a02c2c"} />
            <rect x={x - 1} y={top} width="3" height={bodyHeight} fill={up ? "#0a618f" : "#c92c2c"} />
            {bodyHeight > 2 && <rect x={x} y={top + 1} width="1" height={bodyHeight - 2} fill={up ? "#1c93c9" : "#f07a7a"} />}
          </g>
        );
      })}
      {/* Flat quotes around the session break */}
      <path d="M553 471.500h4M558 471.500h8M576 496.500h6" stroke="#0a618f" />
    </g>
  );
}

function ZoneLines({ zone: z }: { zone: Zone }) {
  return (
    <g>
      <rect x={z.x + 0.5} y={z.top + 0.5} width="100%" height={z.bottom - z.top} fill="none" stroke="#000" />
      <line x1={z.x} x2="100%" y1={z.mid + 0.5} y2={z.mid + 0.5} stroke="#1111b4" strokeDasharray="12 12" />
      <line x1={z.x} x2="100%" y1={z.green + 0.5} y2={z.green + 0.5} stroke="#43a143" strokeDasharray="20 8" />
      {z.red && <line x1={z.x} x2="100%" y1={z.red} y2={z.red} stroke="#dd1111" strokeWidth="2" strokeDasharray="21 9" />}
      {z.labels.map(([text, y]) => (
        <text key={text} x={z.labelX} y={y - 4} textAnchor="middle">
          {text}
        </text>
      ))}
    </g>
  );
}

function PriceAxis() {
  return (
    <div className="relative w-[65px] shrink-0 border-r border-l border-[#7b8f98]">
      <svg className="h-full w-full">
        <g transform={`translate(0 ${-CHART_TOP})`}>
          {PRICE_TICKS.map(([text, y]) => (
            <g key={text}>
              <path d={`M0 ${y + 0.5}h4`} stroke="#7b8f98" />
              <text x="6" y={y + 4} className={clsx(text.length < 5 || text === "1,265" ? "text-xs font-bold" : "")}>
                {text}
              </text>
            </g>
          ))}
        </g>
      </svg>
      <span className="absolute top-[394px] left-[4px] flex h-4 w-[43px] items-center justify-end border border-[#7b8f98] bg-[#f2f2f2] pr-px">
        1,26217
      </span>
      <span className="absolute top-[389px] left-[4px] h-[15px] w-9 bg-[#92e892] pl-px leading-[15px]">2m43s</span>
      <span className="absolute top-[368px] left-[4px] flex h-[21px] w-[59px] items-center border border-[#8a7a3a] bg-gradient-to-b from-[#ffdc33] to-[#f2b90a] pl-[2px]">
        <span className="text-base leading-5">1,2621</span>
        <span className="pb-1 text-[11px]">7</span>
      </span>
    </div>
  );
}

function TimeAxis() {
  return (
    <svg className="h-[18px] w-full shrink-0" shapeRendering="crispEdges">
      <path d="M0 .5h1856" stroke="#7b8f98" />
      {TIME_TICKS.map(([text, x], i) => (
        <g key={i}>
          {text.length > 2 && <path d={`M${x + 0.5} 0v3`} stroke="#7b8f98" />}
          <text x={x} y="14" textAnchor="middle" className={text.length === 2 ? "text-xs font-bold" : ""}>
            {text}
          </text>
        </g>
      ))}
    </svg>
  );
}

// =====================================================================
// Bottom bar: quick actions, scroll bar, zoom
// =====================================================================
function BottomBar() {
  return (
    <div className="flex h-[22px] shrink-0 items-stretch overflow-hidden border-t border-[#6b808a] bg-[#9cb8c4]">
      <button type="button" aria-label="Dessins" className="flex w-8 items-center justify-center border-r border-[#7b8f98]">
        <PencilChartIcon />
      </button>
      <button type="button" aria-label="Choix du dessin" className="flex w-[14px] items-center justify-center">
        <Caret />
      </button>
      <button type="button" aria-label="Indicateurs" className="flex w-8 items-center justify-center border-r border-[#7b8f98] bg-white">
        <svg width="20" height="20" viewBox="0 0 20 20" fill="none">
          <path d="M0 4c6-6 9 10 20 6" stroke="#c33" strokeWidth="1.500" />
          <path d="M0 8c6 6 9-10 20-4" stroke="#2a2" strokeWidth="1.500" />
          <path d="M0 14h4v6H0ZM5 15h4v5H5ZM10 14h4v6h-4ZM15 13h5v7h-5Z" fill="#1a9a1a" />
        </svg>
      </button>
      <button type="button" aria-label="Choix d'indicateur" className="flex w-[13px] items-center justify-center bg-white">
        <Caret />
      </button>
      <button type="button" className="flex w-[67px] items-center justify-center gap-1 bg-[#2b93d6] text-white">
        <svg width="15" height="15" viewBox="0 0 15 15" fill="#fff" stroke="#fff">
          <path d="m12 3-9 4.500L12 12" fill="none" strokeWidth="1.500" />
          <circle cx="12" cy="3" r="2" />
          <circle cx="3" cy="7.500" r="2" />
          <circle cx="12" cy="12" r="2" />
        </svg>
        Partager
      </button>
      <div className="flex items-center gap-2 pr-1 pl-[6px]">
        <svg width="17" height="17" viewBox="0 0 17 17">
          <path d="M1 1h8l2 2v9H1Z" fill="#eef3f5" stroke="#789" />
          <path d="M5 5h11v8h-5l-2 3v-3H5Z" fill="#2c6ec9" />
          <path d="M7 9h7" stroke="#fff" strokeWidth="2" strokeDasharray="2 1" />
        </svg>
        <svg width="17" height="17" viewBox="0 0 17 17">
          <path d="M2.500 1.500h12v14h-12Z" fill="#fff" stroke="#555" />
          <path d="M4 4h6M4 7h5M4 10h8M4 13h6" stroke="#222" strokeWidth="1.500" />
          <path d="m9 3 4 4V3ZM12 11l2 4V9Z" fill="#d22" />
        </svg>
        <svg width="17" height="17" viewBox="0 0 17 17" stroke="#0a6b0a">
          <path d="M1 2h8v3H1ZM4 7h5v3H4ZM1 12h8v3H1Z" fill="#21ad21" />
          <path d="M9 2h3v3H9ZM9 7h7v3H9ZM9 12h5v3H9Z" fill="#ee7070" stroke="#a22" />
        </svg>
        <svg width="17" height="17" viewBox="0 0 17 17" fill="#fff" stroke="#1851b5" strokeWidth="1.500">
          <path d="M1 1h10v10H1ZM6 6h10v10H6Z" />
          <path d="M1 2h10M6 7h10" strokeWidth="2" />
          <path d="m7 13 3-3 2 3 3-3" fill="none" stroke="#2a2" />
        </svg>
        <svg width="17" height="17" viewBox="0 0 17 17">
          <path d="M1 8h5v6H1Z" fill="#c33" stroke="#711" />
          <path d="M11 2h5v11h-5Z" fill="#3c3" stroke="#161" />
          <path d="m3 15 6-6V5l3-2v3l2 1 2-1-2 4h-3l-6 6Z" fill="#fff" stroke="#000" />
        </svg>
        <button type="button" aria-label="Replier" className="text-base leading-4 text-[#33444c]">
          «
        </button>
      </div>
      <div className="my-px flex flex-1 items-stretch border border-[#718993]">
        <button type="button" aria-label="Défiler à gauche" className="flex w-[14px] items-center justify-center border-r border-[#718993] bg-[#b3cfda]">
          <svg width="4" height="8"><path d="M4 0v8L0 4Z" /></svg>
        </button>
        <div className="flex-[480]" />
        <div className="flex-[1004] border-l border-[#718993] bg-gradient-to-b from-[#bddae5] to-[#9bbdca]" />
        <button type="button" aria-label="Défiler à droite" className="flex w-[14px] items-center justify-center border-l border-[#718993] bg-[#b3cfda]">
          <svg width="4" height="8"><path d="M0 0v8l4-4Z" /></svg>
        </button>
      </div>
      <div className="flex items-center gap-2 px-[5px]">
        <svg width="20" height="19" viewBox="0 0 20 19" fill="none">
          <circle cx="8" cy="7" r="5" fill="#d8d8d8" stroke="#222" strokeWidth="1.500" />
          <path d="m12 11 5 6" stroke="#000" strokeWidth="3" />
          <path d="M18 1v9M16 3l2-2 2 2M16 8l2 2 2-2M1 16h9M3 14l-2 2 2 2M8 14l2 2-2 2" stroke="#11c" />
        </svg>
        <MagnifierSign />
        <MagnifierSign plus />
        <svg width="18" height="18" viewBox="0 0 18 18">
          <path d="M0 3h18v5H0Z" fill="#eee" />
          <path d="M1 5.500h16" stroke="#333" strokeWidth="2" strokeDasharray="3 1" />
          <path d="M7 10h4v3h2l-4 4-4-4h2Z" fill="#2b62c0" />
        </svg>
      </div>
    </div>
  );
}

function MagnifierSign({ plus }: { plus?: boolean }) {
  return (
    <svg width="18" height="18" viewBox="0 0 18 18" fill="none">
      <circle cx="7" cy="7" r="5.500" fill="#fff" stroke="#222" strokeWidth="1.500" />
      <path d="m11 11 6 6" stroke="#000" strokeWidth="3" />
      <path d={plus ? "M4 7h6M7 4v6" : "M4 7h6"} stroke="#11d" strokeWidth="2" />
    </svg>
  );
}

// =====================================================================
// Taskbar
// =====================================================================
const APPS: Array<{ name: string; state?: "open" | "active"; icon: ReactNode }> = [
  { name: "Démarrer", icon: <path d="m4 6 7-1v7H4ZM12 5l8-1v8h-8ZM4 13h7v7l-7-1ZM12 13h8v8l-8-1Z" fill="#fff" /> },
  { name: "Rechercher", icon: <><circle cx="14" cy="9" r="5.500" stroke="#fff" strokeWidth="1.500" /><path d="m10 13-7 8" stroke="#fff" strokeWidth="1.500" /></> },
  { name: "Vue des tâches", icon: <path d="M4.500 8.500h11v7h-11ZM4.500 4v2h11V4M4.500 20v-2h11v2M19.500 4v3M19.500 10v10M18 8.500h3" stroke="#fff" strokeWidth="1.500" /> },
  { name: "Word", icon: <><path d="m6 1 17 3v19H6Z" fill="#e9eef8" stroke="#5877b8" /><path d="m1 5 14-3v20L1 19Z" fill="#2a559f" /><path d="m3 8 2 8 3-7 3 7 2-9" stroke="#fff" strokeWidth="1.500" /><path d="M17 8h5M17 12h5M17 16h5" stroke="#5877b8" /></> },
  { name: "Bureau", icon: <><path d="M3 1h18v16H3Z" fill="#0a6bc0" /><path d="M3 17h18l2 4H1Z" fill="#0b4f93" /><path d="M8 4h8v18l-4-3-4 3Z" fill="#2697e8" /></> },
  { name: "Imprimante", icon: <><path d="M5 5h14v6H5Z" fill="#f5f5f5" /><path d="M1 9h22l1 6-2 5H3l-3-5Z" fill="#c9c9c9" /><path d="M1 10h17v3H1Z" fill="#fff" /><path d="M5 16h15v2H5Z" fill="#777" /></> },
  { name: "Store", icon: <><path d="M8 6V2h8v4" stroke="#29a3e5" strokeWidth="2" /><path d="M1 5h22v15q0 3-3 3H4q-3 0-3-3Z" fill="#f6f6f6" /><path d="M7 9h4v4H7Z" fill="#f25022" /><path d="M13 9h4v4h-4Z" fill="#7fba00" /><path d="M7 15h4v4H7Z" fill="#00a4ef" /><path d="M13 15h4v4h-4Z" fill="#ffb900" /></> },
  { name: "Spotify", icon: <><circle cx="12" cy="12" r="11" fill="#1ed760" /><path d="M5 8c5-1.500 10-1 14 1.500M6 12c4-1 8-1 12 1.500M7 16c3-1 6-.5 9 1" stroke="#111" strokeWidth="2" strokeLinecap="round" /></> },
  { name: "Paint", icon: <><path d="M9 5C1 7-1 15 4 20c4 3 8-1 9-3 3-3 8 0 8-5 0-6-6-9-12-7Z" fill="#cfe4f2" stroke="#6c9cc0" /><circle cx="7" cy="10" r="2" fill="#d44" /><circle cx="12" cy="8" r="2" fill="#3a5" /><circle cx="5" cy="15" r="2" fill="#36c" /><circle cx="16" cy="10" r="2" fill="#ea2" /><path d="m12 22 7-17" stroke="#d58a35" strokeWidth="2.500" /><path d="m17 5 4-5 2 2-2 5Z" fill="#a8673a" /></> },
  { name: "Explorateur", state: "open", icon: <><path d="M1 3h8l2 2h12v16H1Z" fill="#f0b429" /><path d="M1 7h22v14H1Z" fill="#ffd766" /><path d="M5 22v-8h14v8h-4v-5H9v5Z" fill="#2f8bd6" /></> },
  { name: "Calculatrice", icon: <><path d="M3 1h18v22H3Z" fill="#56697c" /><path d="M5 3h14v4H5Z" fill="#38c4f0" /><path d="M5 9h4v3H5ZM10 9h4v3h-4ZM15 9h4v3h-4ZM5 13h4v3H5ZM10 13h4v3h-4ZM5 17h4v4H5ZM10 17h4v4h-4Z" fill="#e3e8ec" /><path d="M15 13h4v8h-4Z" fill="#1c62ad" /></> },
  { name: "Chrome", state: "open", icon: <><circle cx="12" cy="12" r="11" fill="#fbbc05" /><path d="M2.500 6.500A11 11 0 0 1 21.500 6.500H12L7.500 14Z" fill="#ea4335" /><path d="M2.500 6.500A11 11 0 0 0 11 23l5-8.500-9-1Z" fill="#34a853" /><circle cx="12" cy="12" r="5.500" fill="#fff" /><circle cx="12" cy="12" r="4" fill="#4285f4" /></> },
  { name: "ProRealTime", state: "active", icon: <><path d="M7 8v14" stroke="#a33" /><path d="M4 10h6v9H4Z" fill="#ee6363" /><path d="M17 0v23" stroke="#2a2" /><path d="M14 5h6v12h-6Z" fill="#4fdc4f" /></> },
];

function Taskbar() {
  return (
    <footer className="flex h-10 shrink-0 items-stretch bg-[#101010] font-['Open_Sans','Noto_Sans',sans-serif] text-white">
      {APPS.map((a) => (
        <button
          key={a.name}
          type="button"
          aria-label={a.name}
          className={clsx(
            "flex w-12 items-center justify-center border-b-2 mr-px",
            a.state ? "border-[#b5b5b5]" : "border-transparent",
            a.state === "active" && "bg-[#3a3a3a]"
          )}
        >
          <svg width="24" height="24" viewBox="0 0 24 24" fill="none">
            {a.icon}
          </svg>
        </button>
      ))}
      <div className="ml-auto flex flex-col items-end justify-between py-[3px] pr-[5px] text-[11px] leading-4">
        <span className="pr-4">09:07</span>
        <span>09/05/2023</span>
      </div>
    </footer>
  );
}

// =====================================================================
// Shared icons
// =====================================================================
function Caret() {
  return (
    <svg width="7" height="4" viewBox="0 0 7 4">
      <path d="M0 0h7L3.500 4Z" />
    </svg>
  );
}

function CandlesIcon({ size }: { size: number }) {
  return (
    <svg width={size} height={size} viewBox="0 0 17 17" shapeRendering="crispEdges">
      <path d="M4.500 4v12" stroke="#b02525" />
      <path d="M1.500 6.500h6v7h-6Z" fill="#ee6363" stroke="#b02525" />
      <path d="M12.500 0v17" stroke="#157a15" />
      <path d="M9.500 3.500h6v9h-6Z" fill="#42dc42" stroke="#157a15" />
    </svg>
  );
}

function ChainIcon() {
  return (
    <svg width="10" height="19" viewBox="0 0 10 19" fill="none">
      <rect x="1.500" y="1.500" width="7" height="7" rx="3" stroke="#555" strokeWidth="3" />
      <rect x="1.500" y="10.500" width="7" height="7" rx="3" stroke="#555" strokeWidth="3" />
      <rect x="1.500" y="1.500" width="7" height="7" rx="3" stroke="#eee" strokeWidth="1.500" />
      <rect x="1.500" y="10.500" width="7" height="7" rx="3" stroke="#eee" strokeWidth="1.500" />
      <path d="M5 6v7" stroke="#555" strokeWidth="3" />
      <path d="M5 6v7" stroke="#eee" strokeWidth="1.500" />
    </svg>
  );
}

function LoupeIcon() {
  return (
    <svg width="16" height="16" viewBox="0 0 16 16" fill="none">
      <circle cx="9.500" cy="6" r="5" fill="#f2f2f2" stroke="#222" strokeWidth="1.500" />
      <path d="m6 10-5 5" stroke="#222" strokeWidth="2" />
    </svg>
  );
}

function PencilChartIcon() {
  return (
    <svg width="20" height="20" viewBox="0 0 20 20" fill="none">
      <path d="m3 17 4-13 4 9" stroke="#444" />
      <path d="m1 3 12 13" stroke="#d11" strokeWidth="1.500" />
      <path d="M1 18.500h12" stroke="#1a9a3a" strokeWidth="1.500" />
      <path d="m9 13 5-11 4 2-5 11-4 2Z" fill="#ffcf33" stroke="#a67c00" />
      <path d="m14 2 4 2 1-2-4-2Z" fill="#ee8888" />
    </svg>
  );
}
